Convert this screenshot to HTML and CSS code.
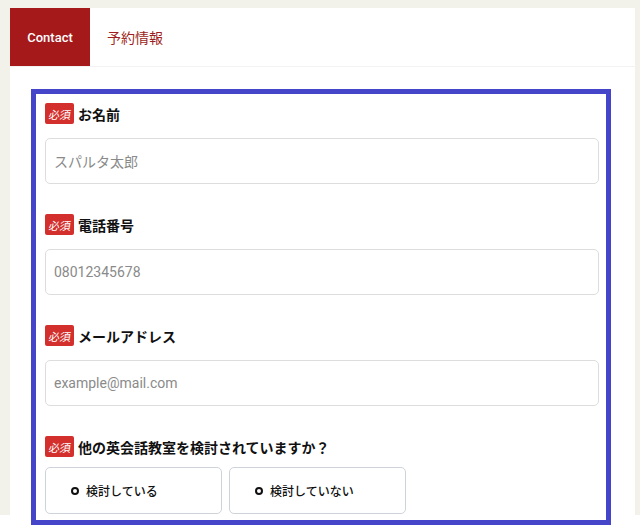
FILE: index.html
```html
<!DOCTYPE html>
<html lang="ja">
<head>
<meta charset="utf-8">
<link rel="stylesheet" href="styles.css">
</head>
<body>
<div class="page">
  <div class="panel">
    <div class="tabs">
      <div class="tab tab-active">Contact</div>
      <div class="tab">予約情報</div>
    </div>
    <div class="form-box">
      <div class="field">
        <div class="label"><span class="badge"><span class="badge-text">必須</span></span><span class="label-text">お名前</span></div>
        <div class="input"><span class="placeholder">スパルタ太郎</span></div>
      </div>
      <div class="field">
        <div class="label"><span class="badge"><span class="badge-text">必須</span></span><span class="label-text">電話番号</span></div>
        <div class="input"><span class="placeholder">08012345678</span></div>
      </div>
      <div class="field">
        <div class="label"><span class="badge"><span class="badge-text">必須</span></span><span class="label-text">メールアドレス</span></div>
        <div class="input"><span class="placeholder">example@mail.com</span></div>
      </div>
      <div class="field">
        <div class="label"><span class="badge"><span class="badge-text">必須</span></span><span class="label-text">他の英会話教室を検討されていますか？</span></div>
        <div class="radios">
          <div class="radio"><span class="dot"></span><span>検討している</span></div>
          <div class="radio"><span class="dot"></span><span>検討していない</span></div>
        </div>
      </div>
    </div>
  </div>
</div>
<div class="after"></div>
</body>
</html>
```
FILE: styles.css
```css
* { box-sizing: border-box; }
html, body { margin: 0; padding: 0; background: #ffffff; }
body {
  font-family: Roboto, "Noto Sans CJK JP", sans-serif;
  color: #111;
  min-height: 532px;
}
.page {
  background: #f2f1ea;
  height: 515px;
  padding: 8px 5px 0 10px;
}
.panel {
  background: #ffffff;
  height: 100%;
}
.tabs {
  display: flex;
  height: 59px;
  border-bottom: 1px solid #f2f2f2;
}
.tab {
  display: flex;
  align-items: center;
  height: 58px;
  padding: 0 17px;
  font-size: 14px;
  color: #9e1f20;
}
.tab-active {
  width: 80px;
  justify-content: center;
  padding: 0;
  background: #a5191a;
  color: #ffffff;
  font-family: Roboto, "Liberation Sans", sans-serif;
  font-weight: 500;
  font-size: 13px;
}
.form-box {
  margin: 22px 0 0 21px;
  width: 580px;
  height: 436px;
  border: 5px solid #4545c9;
  padding: 9px 7px 0 9px;
}
.field { margin-bottom: 30px; }
.label {
  display: flex;
  align-items: center;
  height: 21px;
  margin-bottom: 14px;
}
.badge {
  display: flex;
  align-items: center;
  justify-content: center;
  width: 29px;
  height: 21px;
  background: #d3302d;
  color: #fff;
  border-radius: 2px;
  font-size: 11px;
  margin-right: 4px;
}
.badge-text {
  display: inline-block;
  transform: skewX(-8deg);
}
.label-text {
  font-size: 14px;
  font-weight: 700;
}
.input {
  height: 46px;
  border: 1px solid #dddddd;
  border-radius: 5px;
  display: flex;
  align-items: center;
  padding-left: 8px;
}
.placeholder {
  font-size: 14px;
  color: #8a8a8a;
}
.radios {
  display: flex;
  gap: 7px;
  margin-top: -4px;
}
.radio {
  width: 177px;
  height: 47px;
  border: 1px solid #cfd4da;
  border-radius: 5px;
  display: flex;
  align-items: center;
  padding-left: 25px;
  font-size: 12px;
  font-weight: 500;
}
.dot {
  width: 8px;
  height: 8px;
  border: 2px solid #111;
  border-radius: 50%;
  margin-right: 7px;
}
```
